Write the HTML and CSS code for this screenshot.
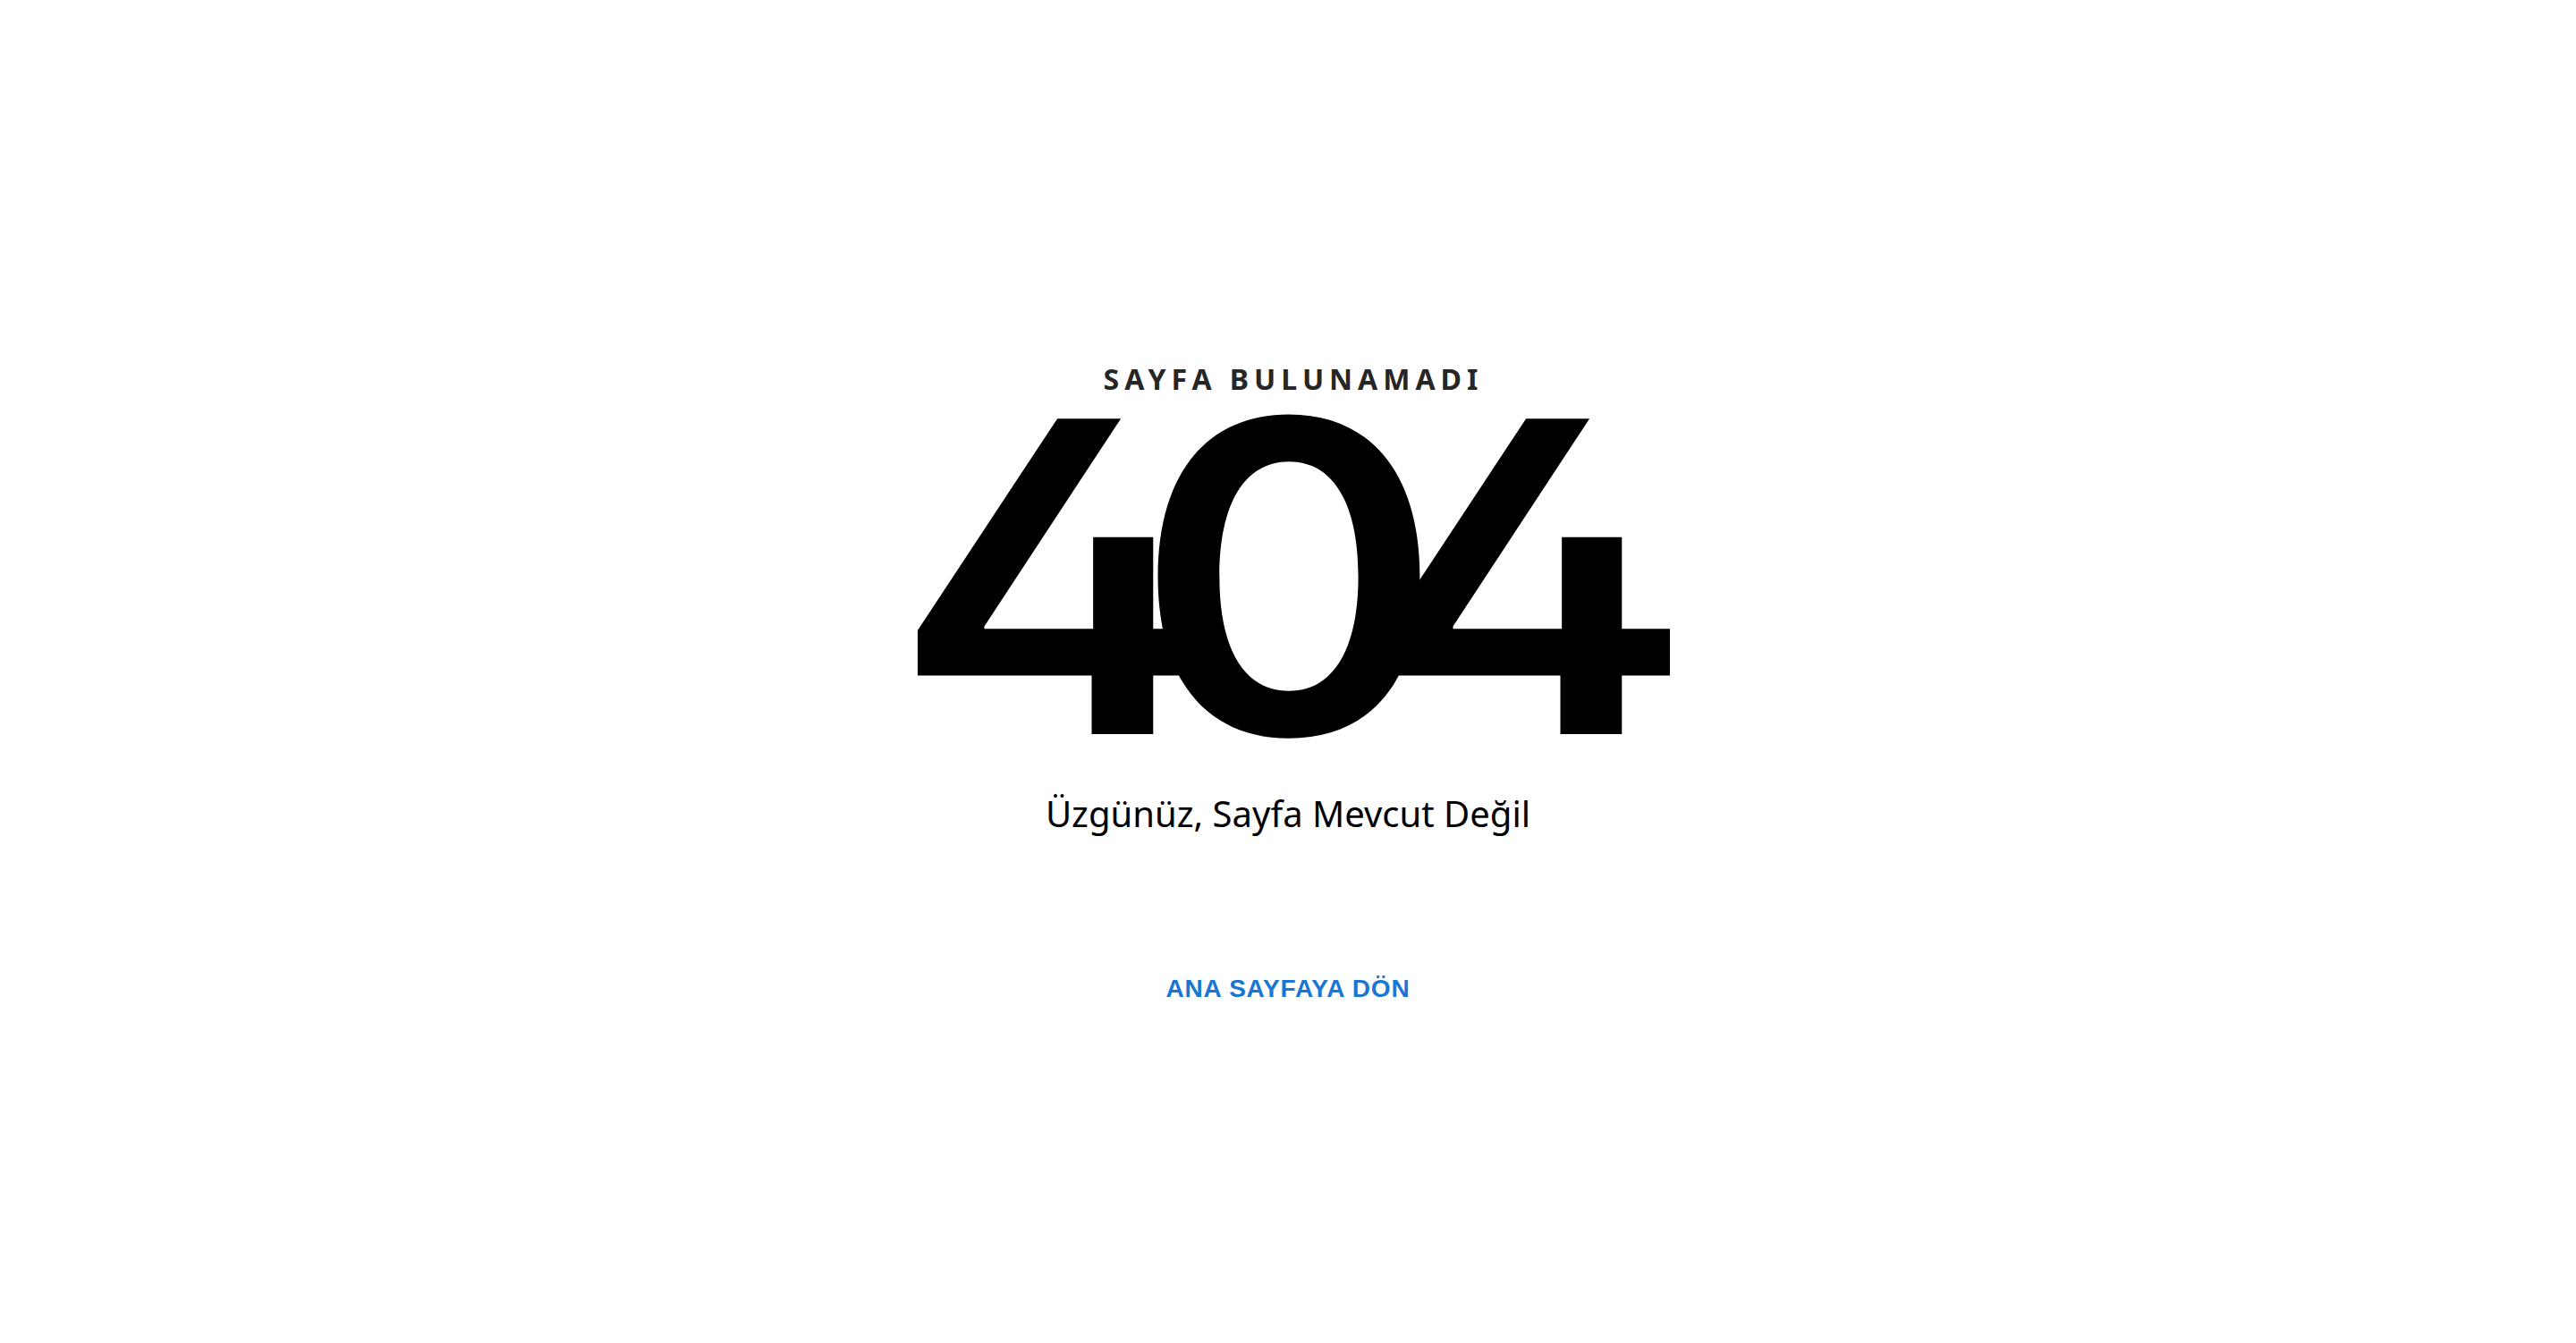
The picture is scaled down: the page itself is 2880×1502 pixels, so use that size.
FILE: index.html
```html
<!DOCTYPE html>
<html lang="tr">
<head>
<meta charset="utf-8">
<title>Sayfa Bulunamadı</title>
<link rel="stylesheet" href="styles.css">
</head>
<body>
<main class="notfound">
  <h3 class="label">Sayfa Bulunamadı</h3>
  <h1 class="code"><span class="digit four">4</span><span class="digit zero">0</span><span class="digit four last">4</span></h1>
  <h2 class="message">Üzgünüz, Sayfa Mevcut Değil</h2>
  <a class="home-btn" href="#">Ana Sayfaya Dön</a>
</main>
</body>
</html>
```

FILE: styles.css
```css
html, body {
  margin: 0;
  padding: 0;
  background: #ffffff;
}

.notfound {
  display: flex;
  flex-direction: column;
  align-items: center;
  padding-top: 405px;
  min-height: 1502px;
  box-sizing: border-box;
}

.label {
  margin: 0;
  font-family: "Noto Sans", "Open Sans", sans-serif;
  font-weight: 700;
  font-size: 32px;
  line-height: 38.4px;
  letter-spacing: 6px;
  padding-left: 12px;
  text-transform: uppercase;
  color: #262626;
}

.code {
  margin: 8px 0 0 0;
  padding-left: 12px;
  font-family: Inter, sans-serif;
  font-feature-settings: "cv02" 1;
  font-weight: 600;
  font-size: 485px;
  line-height: 388px;
  height: 388px;
  letter-spacing: 0;
  white-space: nowrap;
  color: #000000;
}

.digit {
  display: inline-block;
}

.four {
  transform: scaleX(1.157);
}

.zero {
  margin-left: -65px;
  transform: scaleX(1.08);
}

.last {
  margin-left: -54px;
}

.message {
  margin: 47px 0 0 0;
  font-family: "Noto Sans", sans-serif;
  font-weight: 400;
  font-size: 40px;
  line-height: 48px;
  color: #000000;
}

.home-btn {
  margin-top: 130px;
  display: inline-flex;
  align-items: center;
  justify-content: center;
  padding: 16px 22px;
  min-width: 128px;
  font-family: "Liberation Sans", Arial, sans-serif;
  font-weight: 700;
  font-size: 28px;
  line-height: 52.5px;
  letter-spacing: 0.8px;
  text-transform: uppercase;
  text-decoration: none;
  color: #1976d2;
  border-radius: 8px;
}
```
